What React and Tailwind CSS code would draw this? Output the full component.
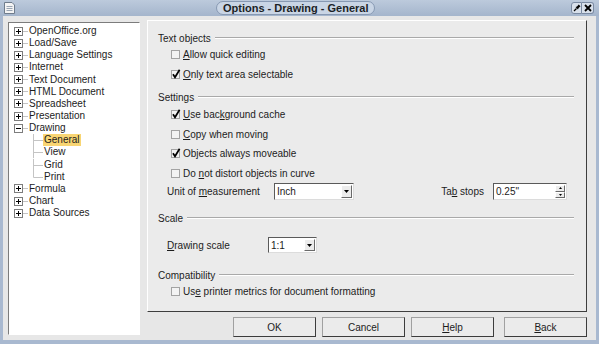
import React from "react";

const tree = [
  { label: "OpenOffice.org", kind: "plus" },
  { label: "Load/Save", kind: "plus" },
  { label: "Language Settings", kind: "plus" },
  { label: "Internet", kind: "plus" },
  { label: "Text Document", kind: "plus" },
  { label: "HTML Document", kind: "plus" },
  { label: "Spreadsheet", kind: "plus" },
  { label: "Presentation", kind: "plus" },
  { label: "Drawing", kind: "minus" },
  { label: "General", kind: "child", selected: true },
  { label: "View", kind: "child" },
  { label: "Grid", kind: "child" },
  { label: "Print", kind: "child", last: true },
  { label: "Formula", kind: "plus" },
  { label: "Chart", kind: "plus" },
  { label: "Data Sources", kind: "plus" },
];

// expander box of the tree
const Expander = ({ open }) => (
  <svg width="9" height="9" className="shrink-0">
    <rect x="0.5" y="0.5" width="8" height="8" fill="#fff" stroke="#7d7d7d" />
    <line x1="2" y1="4.5" x2="7" y2="4.5" stroke="#000" />
    {!open && <line x1="4.5" y1="2" x2="4.5" y2="7" stroke="#000" />}
  </svg>
);

const TreeRow = ({ item }) => {
  if (item.kind === "child") {
    return (
      <div className="h-[12.15px] flex items-center pl-[24px]">
        <svg width="10" height="12.15" className="shrink-0">
          <line x1="0.5" y1="0" x2="0.5" y2={item.last ? 6.5 : 12.15} stroke="#c4c4c4" />
          <line x1="0.5" y1="6.5" x2="10" y2="6.5" stroke="#c4c4c4" />
        </svg>
        <span
          className={
            "px-[1px] leading-[12px] " + (item.selected ? "bg-[#f8d573]" : "")
          }
        >
          {item.label}
        </span>
      </div>
    );
  }
  return (
    <div className="h-[12.15px] flex items-center pl-[5px]">
      <Expander open={item.kind === "minus"} />
      <span className="w-[5px] h-px bg-[#c4c4c4] shrink-0" />
      <span className="ml-[1px] leading-[12px]">{item.label}</span>
    </div>
  );
};

const Check = ({ checked }) => (
  <svg width="12" height="11" className="shrink-0">
    <rect x="0.5" y="1.5" width="8" height="8" fill="#f3f3f3" stroke="#a3a3a3" />
    {checked && (
      <path d="M2 5.2 L4 8.3 L8.6 0.8" fill="none" stroke="#000" strokeWidth="1.7" />
    )}
  </svg>
);

const U = ({ children }) => <span className="underline underline-offset-1">{children}</span>;

const CheckRow = ({ checked, mt, children }) => (
  <div className={"h-[16px] flex items-center pl-[23px] " + mt}>
    <Check checked={checked} />
    <span>{children}</span>
  </div>
);

const Group = ({ title, mt }) => (
  <div className={"h-[16px] flex items-center pl-[10px] pr-[12px] " + mt}>
    <span>{title}</span>
    <span className="flex-1 ml-[4px] border-t border-[#a9a9a9] border-b-white border-b h-[2px]" />
  </div>
);

const Arrow = () => (
  <span className="w-[11px] h-full flex items-center justify-center bg-[#ececec] border-l border-t border-white border-r border-b border-r-[#6a6a6a] border-b-[#6a6a6a]">
    <svg width="5" height="3">
      <path d="M0 0 H5 L2.5 3 Z" fill="#000" />
    </svg>
  </span>
);

const Select = ({ value, w, h }) => (
  <div
    className={
      "flex items-stretch bg-white border border-t-[#5a5a5a] border-l-[#5a5a5a] border-r-[#dcdcdc] border-b-[#dcdcdc] " +
      w +
      " " +
      h
    }
  >
    <span className="flex-1 flex items-center pl-[2px]">{value}</span>
    <span className="p-[1px] flex">
      <Arrow />
    </span>
  </div>
);

const Button = ({ children, className = "" }) => (
  <button
    className={
      "w-[83px] h-[20px] bg-[#ebebeb] border border-[#a0a0a0] border-r-[#3c3c3c] border-b-[#3c3c3c] flex items-center justify-center " +
      className
    }
  >
    {children}
  </button>
);

export default function App() {
  return (
    <div className="w-[599px] h-[344px] flex flex-col bg-[#a9b9d0] text-[10px] text-[#1c1c1c] font-['Liberation_Sans',Arial,sans-serif] overflow-hidden">
      {/* title bar */}
      <div className="h-[16px] flex items-center bg-linear-to-b from-[#bccadc] to-[#a4b5cc]">
        <svg width="11" height="12" className="ml-[4px] shrink-0">
          <path d="M0.5 0.5 H8 L10.5 3 V11.5 H0.5 Z" fill="#f4f4f4" stroke="#6f7c8c" />
          <line x1="2.5" y1="4.5" x2="8.5" y2="4.5" stroke="#9aa5b3" />
          <line x1="2.5" y1="6.5" x2="8.5" y2="6.5" stroke="#9aa5b3" />
          <line x1="2.5" y1="8.5" x2="8.5" y2="8.5" stroke="#9aa5b3" />
        </svg>
        <div className="ml-[201px] h-[14px] px-[6px] rounded-full bg-[#c9d5e5] border border-[#8799b3] flex items-center">
          <span className="font-bold text-[11px] text-[#1b1f26] leading-none">
            Options - Drawing - General
          </span>
        </div>
        <div className="flex-1" />
        <div className="flex mr-[5px]">
          <span className="w-[11px] h-[12px] rounded-l-[3px] bg-[#d8e0eb] border border-[#7a8aa2] flex items-center justify-center">
            <svg width="8" height="8">
              <path d="M1 7 L3.5 4.5" stroke="#000" strokeWidth="1.2" />
              <path d="M2.5 3 L5 5.5 L5.6 4 L7.5 2.3 L5.7 0.5 L4 2.4 Z" fill="#000" />
            </svg>
          </span>
          <span className="w-[12px] h-[12px] rounded-r-[3px] bg-[#d8e0eb] border border-l-0 border-[#7a8aa2] flex items-center justify-center">
            <svg width="8" height="8">
              <path d="M1 1 L7 7 M7 1 L1 7" stroke="#000" strokeWidth="1.8" />
            </svg>
          </span>
        </div>
      </div>

      {/* body */}
      <div className="flex-1 mx-[3px] mb-[4px] bg-[#e7e7e7] flex">
        <div className="ml-[5px] mt-[6px] w-[132px] h-[313px] bg-white border border-t-[#7c7c7c] border-l-[#7c7c7c] border-r-white border-b-white pt-[2px]">
          {tree.map((item) => (
            <TreeRow key={item.label} item={item} />
          ))}
        </div>

        <div className="ml-[7px] mt-[4px] flex flex-col">
          <div className="w-[440px] h-[292px] bg-[#ebebeb] border border-t-white border-l-white border-r-[#3e3e3e] border-b-[#3e3e3e] pt-[9px]">
            <Group title="Text objects" mt="" />
            <CheckRow checked={false} mt="">
              <U>A</U>llow quick editing
            </CheckRow>
            <CheckRow checked mt="mt-[4px]">
              <U>O</U>nly text area selectable
            </CheckRow>
            <Group title="Settings" mt="mt-[7px]" />
            <CheckRow checked mt="mt-[1px]">
              <U>U</U>se bac<U>k</U>ground cache
            </CheckRow>
            <CheckRow checked={false} mt="mt-[4px]">
              <U>C</U>opy when moving
            </CheckRow>
            <CheckRow checked mt="mt-[3px]">
              Ob<U>j</U>ects always moveable
            </CheckRow>
            <CheckRow checked={false} mt="mt-[4px]">
              Do <U>n</U>ot distort objects in curve
            </CheckRow>
            <div className="h-[17px] mt-[2px] flex items-center pl-[19px] pr-[19px]">
              <span className="w-[107px]">
                Unit of <U>m</U>easurement
              </span>
              <Select value="Inch" w="w-[80px]" h="h-[17px]" />
              <div className="flex-1" />
              <span>
                Ta<U>b</U> stops
              </span>
              <div className="ml-[9px] w-[74px] h-[17px] flex items-stretch bg-white border border-t-[#5a5a5a] border-l-[#5a5a5a] border-r-[#dcdcdc] border-b-[#dcdcdc]">
                <span className="flex-1 flex items-center pl-[2px]">0.25"</span>
                <span className="w-[12px] flex flex-col p-[1px]">
                  <span className="flex-1 flex items-center justify-center bg-[#ececec] border border-t-white border-l-white border-r-[#6a6a6a] border-b-[#6a6a6a]">
                    <svg width="3" height="2">
                      <path d="M0 2 H3 L1.5 0 Z" fill="#000" />
                    </svg>
                  </span>
                  <span className="flex-1 flex items-center justify-center bg-[#ececec] border border-t-white border-l-white border-r-[#6a6a6a] border-b-[#6a6a6a]">
                    <svg width="3" height="2">
                      <path d="M0 0 H3 L1.5 2 Z" fill="#000" />
                    </svg>
                  </span>
                </span>
              </div>
            </div>
            <Group title="Scale" mt="mt-[10px]" />
            <div className="h-[16px] mt-[11px] flex items-center pl-[19px]">
              <span className="w-[101px]">
                <U>D</U>rawing scale
              </span>
              <Select value="1:1" w="w-[49px]" h="h-[16px]" />
            </div>
            <Group title="Compatibility" mt="mt-[14px]" />
            <CheckRow checked={false} mt="">
              Us<U>e</U> printer metrics for document formatting
            </CheckRow>
          </div>

          <div className="mt-[5px] flex justify-end gap-[6px] w-[440px]">
            <Button>OK</Button>
            <Button>Cancel</Button>
            <Button>
              <span>
                <U>H</U>elp
              </span>
            </Button>
            <Button className="ml-[4px]">
              <span>
                <U>B</U>ack
              </span>
            </Button>
          </div>
        </div>
      </div>
    </div>
  );
}
